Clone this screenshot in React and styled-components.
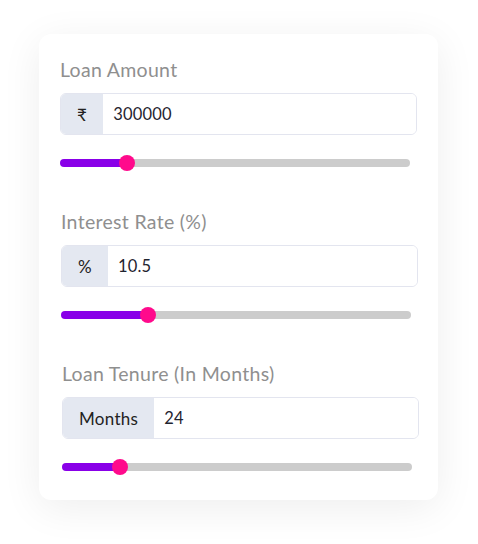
import React, { useState } from 'react'
import styled, { createGlobalStyle } from 'styled-components'

const GlobalStyle = createGlobalStyle`
  body {
    margin: 0;
    background: #ffffff;
    font-family: Lato, "Noto Sans", sans-serif;
  }
`

const Page = styled.div`
  padding: 34px 40px 45px 39px;
`

const Card = styled.div`
  width: 399px;
  box-sizing: border-box;
  padding: 24px 21px 29px;
  background: #fff;
  border-radius: 12px;
  box-shadow: 0 8px 40px rgba(0, 0, 0, 0.07);
  display: flex;
  flex-direction: column;
  gap: 43px;
`

const Section = styled.div`
  display: flex;
  flex-direction: column;
  transform: translateX(${p => p.$nudge || 0}px);
`

const Label = styled.label`
  font-size: 19.5px;
  line-height: 24px;
  letter-spacing: 0.3px;
  color: #8f8f8f;
  margin-bottom: 11px;
`

const InputGroup = styled.div`
  display: flex;
  height: 42px;
  box-sizing: border-box;
  border: 1px solid #e3e5ef;
  border-radius: 6px;
  overflow: hidden;
`

const Addon = styled.span`
  display: flex;
  align-items: center;
  padding: 0 16px;
  background: #e4e8f1;
  color: #222;
  font-size: 17px;
  letter-spacing: 0.3px;
`

const Field = styled.input`
  flex: 1;
  min-width: 0;
  border: none;
  outline: none;
  padding: 0 10px;
  font-family: inherit;
  font-size: 16.5px;
  letter-spacing: 0.2px;
  color: #1f2430;
  background: #fff;
`

const Range = styled.input.attrs({ type: 'range' })`
  -webkit-appearance: none;
  appearance: none;
  display: block;
  width: 98%;
  height: 8px;
  margin: 24px 0 0;
  border-radius: 4px;
  outline: none;
  background: linear-gradient(
    to right,
    #8900e8 0,
    #8900e8 var(--fill),
    #cccccc var(--fill)
  );

  &::-webkit-slider-thumb {
    -webkit-appearance: none;
    width: 16px;
    height: 16px;
    border: none;
    border-radius: 50%;
    background: #ff0a8c;
    cursor: pointer;
  }
`

const fields = [
  { key: 'amount', label: 'Loan Amount', addon: '₹', min: 0, max: 1700000, step: 1000, init: 300000 },
  { key: 'rate', label: 'Interest Rate (%)', addon: '%', min: 1, max: 41, step: 0.5, init: 10.5 },
  { key: 'tenure', label: 'Loan Tenure (In Months)', addon: 'Months', min: 0, max: 160, step: 1, init: 24 },
]

const Slider = ({ min, max, step, value, onChange }) => {
  const ratio = (value - min) / (max - min)
  // fill stops under the thumb centre (16px thumb)
  const fill = `calc(8px + ${ratio} * (100% - 16px))`
  return (
    <Range
      min={min}
      max={max}
      step={step}
      value={value}
      onChange={e => onChange(Number(e.target.value))}
      style={{ '--fill': fill }}
    />
  )
}

export default function App() {
  const [values, setValues] = useState(
    Object.fromEntries(fields.map(f => [f.key, f.init]))
  )
  const set = key => v => setValues(s => ({ ...s, [key]: v }))

  return (
    <Page>
      <GlobalStyle />
      <Card>
        {fields.map((f, i) => (
          <Section key={f.key} $nudge={i}>
            <Label>{f.label}</Label>
            <InputGroup>
              <Addon>{f.addon}</Addon>
              <Field
                value={values[f.key]}
                onChange={e => set(f.key)(Number(e.target.value) || 0)}
              />
            </InputGroup>
            <Slider {...f} value={values[f.key]} onChange={set(f.key)} />
          </Section>
        ))}
      </Card>
    </Page>
  )
}
